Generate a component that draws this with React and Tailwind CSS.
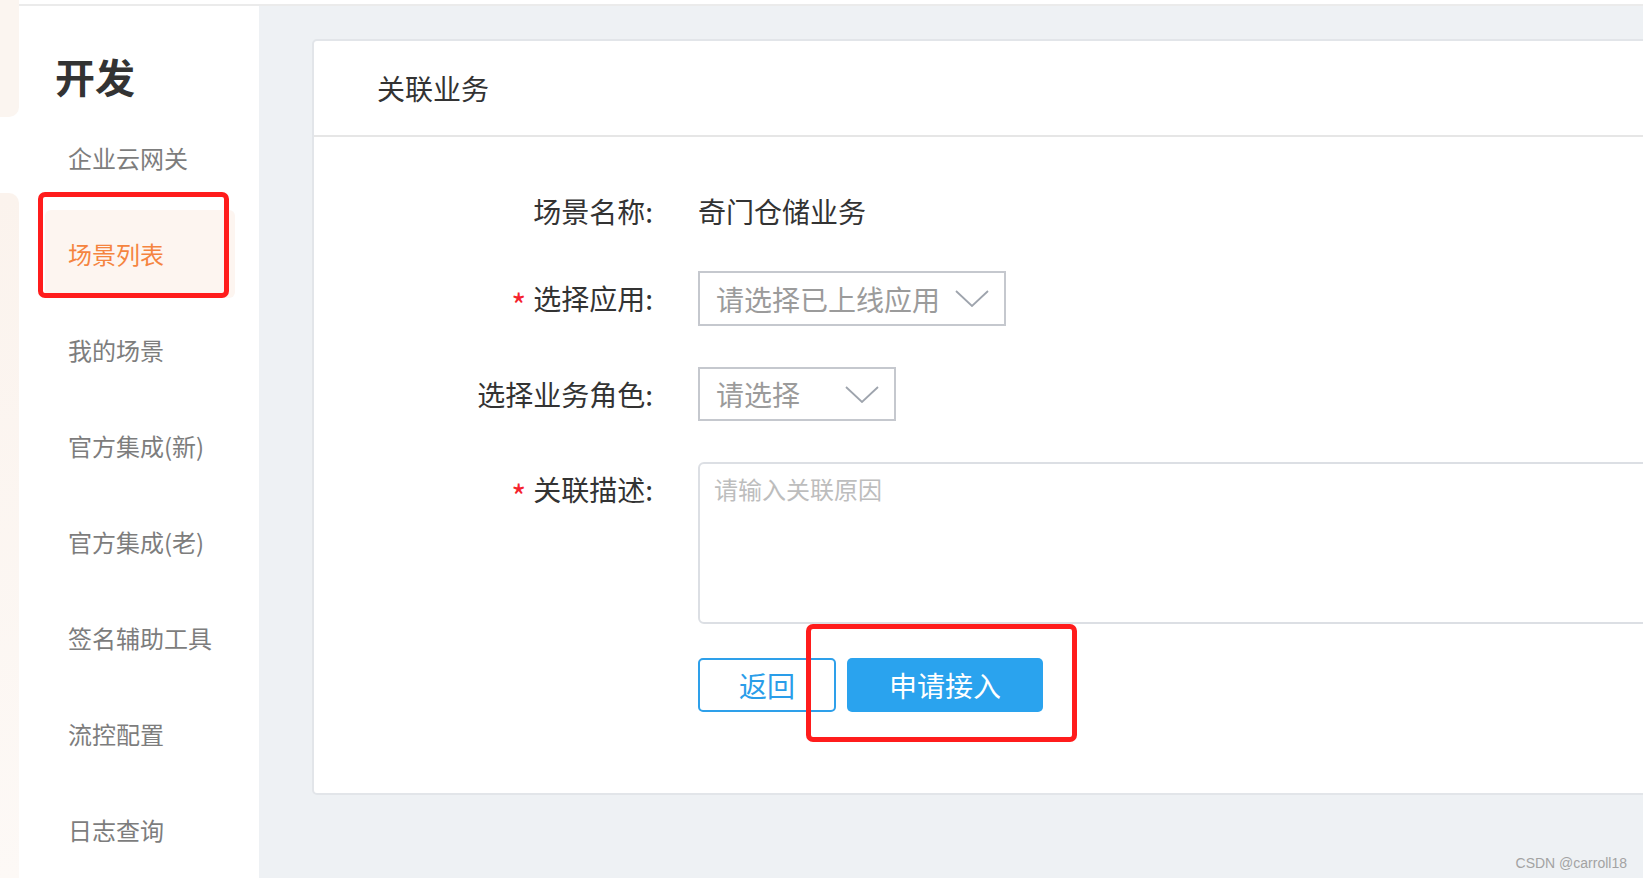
import React from "react";

const menu = [
  "企业云网关",
  "场景列表",
  "我的场景",
  "官方集成(新)",
  "官方集成(老)",
  "签名辅助工具",
  "流控配置",
  "日志查询",
];

const Chevron = () => (
  <svg width="34" height="17" viewBox="0 0 34 17" fill="none">
    <path d="M1 1 L17 16 L33 1" stroke="#9ea4ad" strokeWidth="1.8" />
  </svg>
);

const Label = ({ required, children }) => (
  <div className="w-[339px] shrink-0 h-[54px] flex items-center justify-end text-[28px] text-[#333] leading-none">
    {required && (
      <span className="text-[#f5222d] text-[32px] mr-[7px] mt-[12px]">*</span>
    )}
    <span>{children}:</span>
  </div>
);

const App = () => {
  return (
    <div
      className="relative w-[1643px] h-[878px] flex overflow-hidden bg-white"
      style={{ fontFamily: '"Noto Sans CJK SC", "Noto Sans", sans-serif' }}
    >
      {/* left edge strip */}
      <div className="w-[19px] shrink-0 flex flex-col">
        <div className="h-[117px] rounded-br-[10px] bg-[#fbf5f0]" />
        <div className="h-[76px]" />
        <div className="flex-1 rounded-tr-[10px] bg-gradient-to-b from-[#fbf3ed] to-[#fdf9f6]" />
      </div>

      <div className="flex-1 min-w-0 flex flex-col">
        <div className="h-[5px] bg-white" />
        <div className="h-[2px] bg-[#ebebeb]" />
        <div className="flex-1 flex min-w-0">
          {/* sidebar */}
          <div className="w-[240px] shrink-0 bg-white">
            <div className="h-[104px] pt-[50px] pl-[36px] text-[40px] leading-[40px] font-bold text-[#333]">
              开发
            </div>
            {menu.map((item, i) => (
              <div key={item} className="h-[96px] flex items-center">
                <div
                  className={
                    i === 1
                      ? "ml-[26px] w-[190px] h-[88px] pl-[23px] flex items-center rounded-[6px] bg-[#fdf5f0] text-[24px] text-[#f5843f]"
                      : "ml-[26px] w-[190px] h-[88px] pl-[23px] flex items-center text-[24px] text-[#7d7d7d]"
                  }
                >
                  {item}
                </div>
              </div>
            ))}
          </div>

          {/* main */}
          <div className="flex-1 min-w-0 bg-[#eef1f4] pl-[53px] pt-[33px] overflow-hidden">
            <div className="w-[1400px] h-[756px] bg-white border-2 border-[#e2e5e9] rounded-[5px]">
              <div className="h-[96px] border-b-2 border-[#e6e6e6] flex items-center pl-[63px] text-[28px] leading-[36px] text-[#333]">
                关联业务
              </div>
              <div className="pt-[47px]">
                <div className="flex items-start">
                  <Label>场景名称</Label>
                  <div className="ml-[45px] h-[54px] flex items-center text-[28px] text-[#333] leading-none">
                    奇门仓储业务
                  </div>
                </div>

                <div className="flex items-start mt-[33px]">
                  <Label required>选择应用</Label>
                  <div className="ml-[45px] w-[308px] h-[55px] border-2 border-[#c5c8ce] flex items-center justify-between pl-[16px] pr-[15px]">
                    <span className="text-[28px] text-[#9b9b9b] leading-none">请选择已上线应用</span>
                    <Chevron />
                  </div>
                </div>

                <div className="flex items-start mt-[41px]">
                  <Label>选择业务角色</Label>
                  <div className="ml-[45px] w-[198px] h-[54px] border-2 border-[#c5c8ce] flex items-center justify-between pl-[16px] pr-[15px]">
                    <span className="text-[28px] text-[#9b9b9b] leading-none">请选择</span>
                    <Chevron />
                  </div>
                </div>

                <div className="flex items-start mt-[41px]">
                  <Label required>关联描述</Label>
                  <div className="ml-[45px] w-[1100px] shrink-0 h-[162px] border-2 border-[#dcdfe4] rounded-[6px] pl-[14px] pt-[9px]">
                    <span className="text-[24px] leading-[32px] text-[#bdbdbd]">请输入关联原因</span>
                  </div>
                </div>

                <div className="flex items-start mt-[34px] pl-[384px] gap-[11px]">
                  <button className="w-[138px] h-[54px] border-2 border-[#2ea0ea] rounded-[5px] text-[28px] leading-none text-[#2a9de9] bg-white">
                    返回
                  </button>
                  <button className="w-[196px] h-[54px] rounded-[5px] text-[28px] leading-none text-white bg-[#2aa3ee]">
                    申请接入
                  </button>
                </div>
              </div>
            </div>
          </div>
        </div>
      </div>

      {/* annotation boxes */}
      <div className="absolute left-[38px] top-[192px] w-[191px] h-[106px] border-[5px] border-[#ff1c1c] rounded-[7px]" />
      <div className="absolute left-[806px] top-[624px] w-[271px] h-[118px] border-[5px] border-[#ff1c1c] rounded-[7px]" />

      <div
        className="absolute right-[16px] bottom-[7px] text-[14px] leading-[16px] text-[#a3a3a3]"
        style={{ fontFamily: '"Liberation Sans", sans-serif' }}
      >
        CSDN @carroll18
      </div>
    </div>
  );
};

export default App;
